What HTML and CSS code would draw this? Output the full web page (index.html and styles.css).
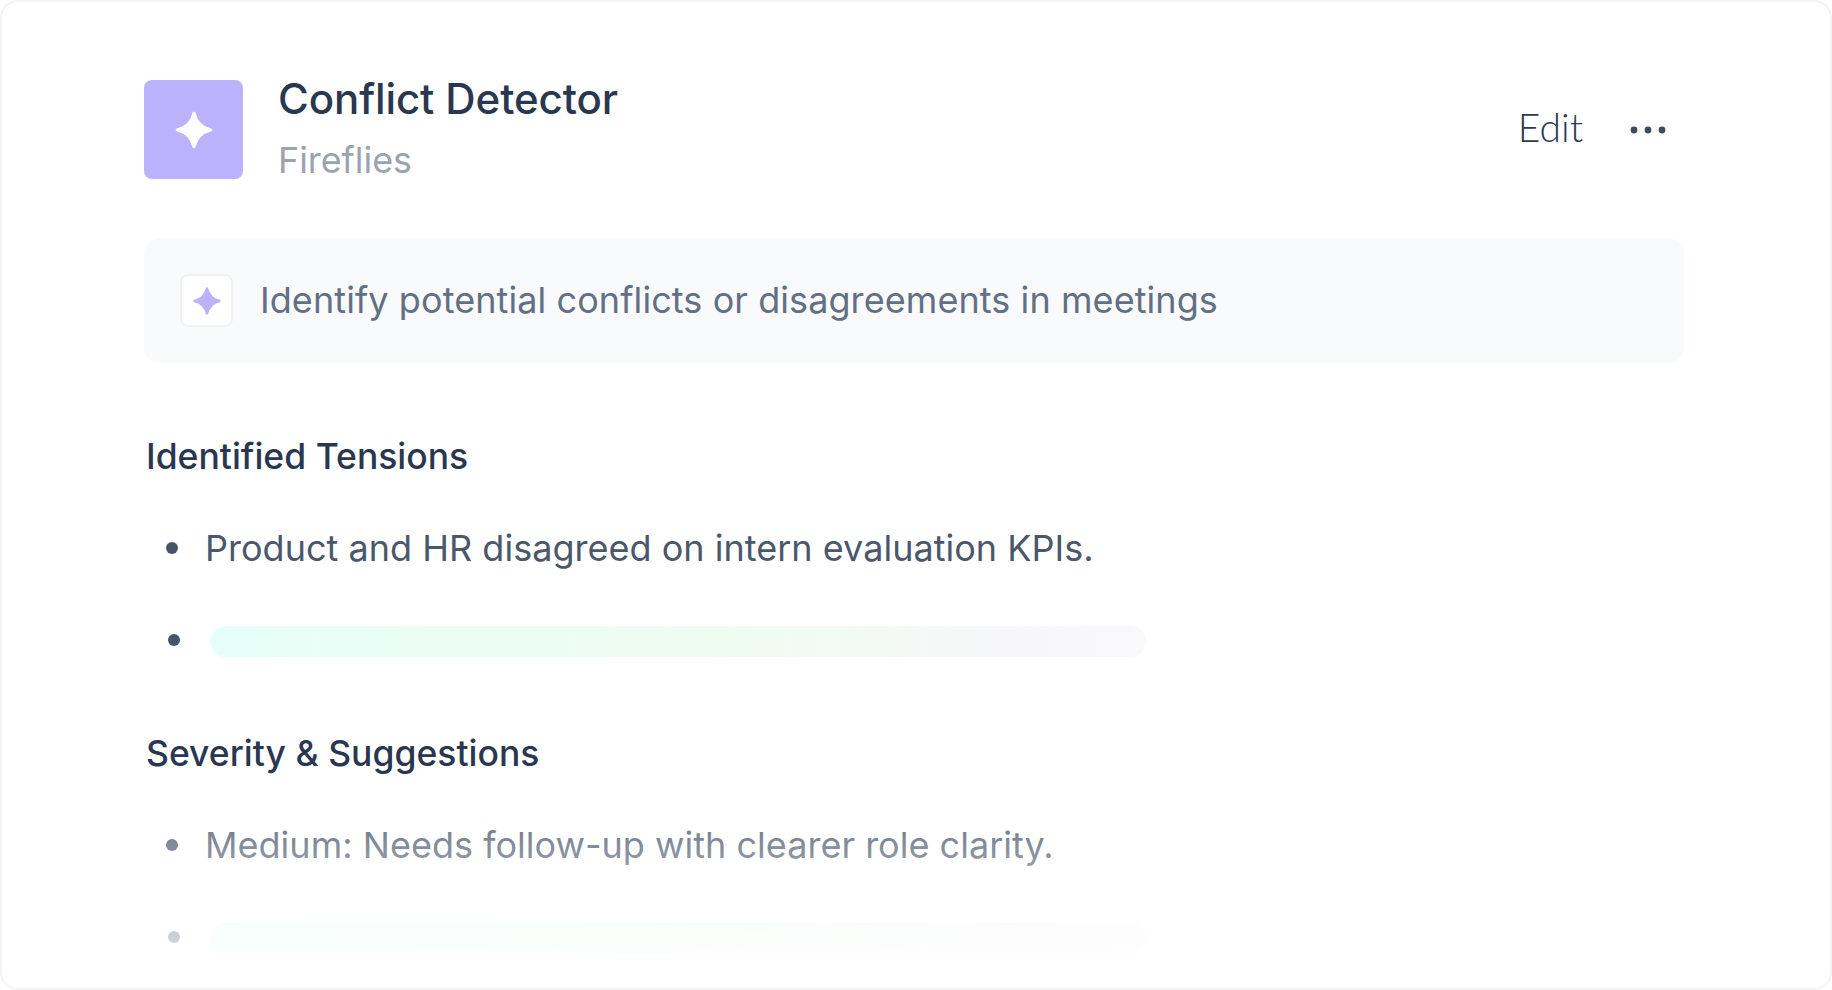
FILE: index.html
```html
<!DOCTYPE html>
<html lang="en">
<head>
<meta charset="utf-8">
<title>Conflict Detector</title>
<link rel="stylesheet" href="styles.css">
</head>
<body>
<main class="card">
  <header class="head">
    <div class="app-icon">
      <svg class="spark-lg" viewBox="0 0 24 24"><path d="M12 2C13.2 7 17 10.8 22 12C17 13.2 13.2 17 12 22C10.8 17 7 13.2 2 12C7 10.8 10.8 7 12 2Z"/></svg>
    </div>
    <div class="titles">
      <h1 class="title">Conflict Detector</h1>
      <p class="sub">Fireflies</p>
    </div>
    <div class="actions">
      <span class="edit">Edit</span>
      <svg class="more" viewBox="0 0 36 8"><circle cx="4" cy="4" r="3.4"/><circle cx="18" cy="4" r="3.4"/><circle cx="32" cy="4" r="3.4"/></svg>
    </div>
  </header>
  <section class="prompt">
    <div class="prompt-icon">
      <svg class="spark-sm" viewBox="0 0 24 24"><path d="M12 2C13.2 7 17 10.8 22 12C17 13.2 13.2 17 12 22C10.8 17 7 13.2 2 12C7 10.8 10.8 7 12 2Z"/></svg>
    </div>
    <p class="prompt-text">Identify potential conflicts or disagreements in meetings</p>
  </section>
  <h2 class="section-title first">Identified Tensions</h2>
  <ul class="items">
    <li class="item"><span class="dot"></span><span class="item-text">Product and HR disagreed on intern evaluation KPIs.</span></li>
    <li class="item"><span class="dot dot-bar"></span><span class="bar"></span></li>
  </ul>
  <h2 class="section-title">Severity &amp; Suggestions</h2>
  <ul class="items">
    <li class="item"><span class="dot"></span><span class="item-text">Medium: Needs follow-up with clearer role clarity.</span></li>
    <li class="item item-last"><span class="dot dot-bar"></span><span class="bar"></span></li>
  </ul>
  <div class="fade"></div>
</main>
</body>
</html>
```
FILE: styles.css
```css
* { box-sizing: border-box; }
html, body { margin: 0; height: 100%; background: #fff; }
body { overflow: hidden; font-family: Inter, "Noto Sans", sans-serif; }
.card {
  position: relative;
  height: 990px;
  padding: 78px 146px 0 142px;
  background: #fff;
  border: 2px solid #f3f4f6;
  border-radius: 18px;
  overflow: hidden;
}
.head { display: flex; align-items: center; height: 99px; }
.app-icon {
  width: 99px; height: 99px; flex: none;
  display: flex; align-items: center; justify-content: center;
  background: #bcb2fb; border-radius: 8px;
}
.spark-lg { width: 40px; height: 40px; fill: #fff; stroke: #fff; stroke-width: 2; stroke-linejoin: round; }
.titles { margin-left: 35px; flex: 1; }
.title { margin: -6px 0 0; font-size: 42px; line-height: 52px; font-weight: 500; color: #2a3750; letter-spacing: -0.1px; }
.sub { margin: 15px 0 0; font-size: 35.8px; line-height: 40px; color: #9aa3b1; }
.actions { display: flex; align-items: center; gap: 47px; padding-right: 18px; }
.edit { font-family: Lato, sans-serif; font-size: 39px; line-height: 40px; font-weight: 300; color: #2d3a52; padding-bottom: 6px; }
.more { width: 36px; height: 8px; fill: #3f4b63; }
.prompt {
  display: flex; align-items: center; gap: 27px;
  height: 125px; margin-top: 59px; padding-left: 36px;
  background: #f9fafb; border-radius: 16px;
}
.prompt-icon {
  width: 53px; height: 53px; flex: none;
  display: flex; align-items: center; justify-content: center;
  background: #fff; border: 2px solid #f1f2f5; border-radius: 8px;
}
.spark-sm { width: 30px; height: 30px; fill: #bcb2fb; stroke: #bcb2fb; stroke-width: 2; stroke-linejoin: round; }
.prompt-text { margin: 0 0 2px; font-size: 36px; line-height: 44px; color: #626f84; letter-spacing: 0.08px; }
.section-title { margin: 45px 0 0 2px; font-size: 35.5px; line-height: 44px; font-weight: 500; color: #2a3750; }
.section-title.first { margin-top: 72px; }
.items { list-style: none; margin: 41px 0 0; padding: 0 0 0 22px; }
.item { display: flex; align-items: center; height: 92px; }
.item:first-child { height: 56px; margin-bottom: 19px; }
.item-last { margin-top: 1px; }
.dot { width: 12px; height: 12px; flex: none; border-radius: 50%; background: #46546b; }
.dot-bar { margin: 0 0 2px 2px; }
.item-text { margin-left: 27px; font-size: 36px; line-height: 44px; color: #4a576c; letter-spacing: 0.02px; }
.bar { width: 936px; height: 31px; margin-left: 30px; border-radius: 16px; background: linear-gradient(90deg, #e7fff9 0%, #effdf1 55%, #f7f7f9 85%, #f9f9fb 100%); }
.fade { position: absolute; left: 0; right: 0; bottom: 0; height: 215px; background: linear-gradient(180deg, rgba(255,255,255,0) 0%, rgba(255,255,255,0.95) 100%); pointer-events: none; }
```
